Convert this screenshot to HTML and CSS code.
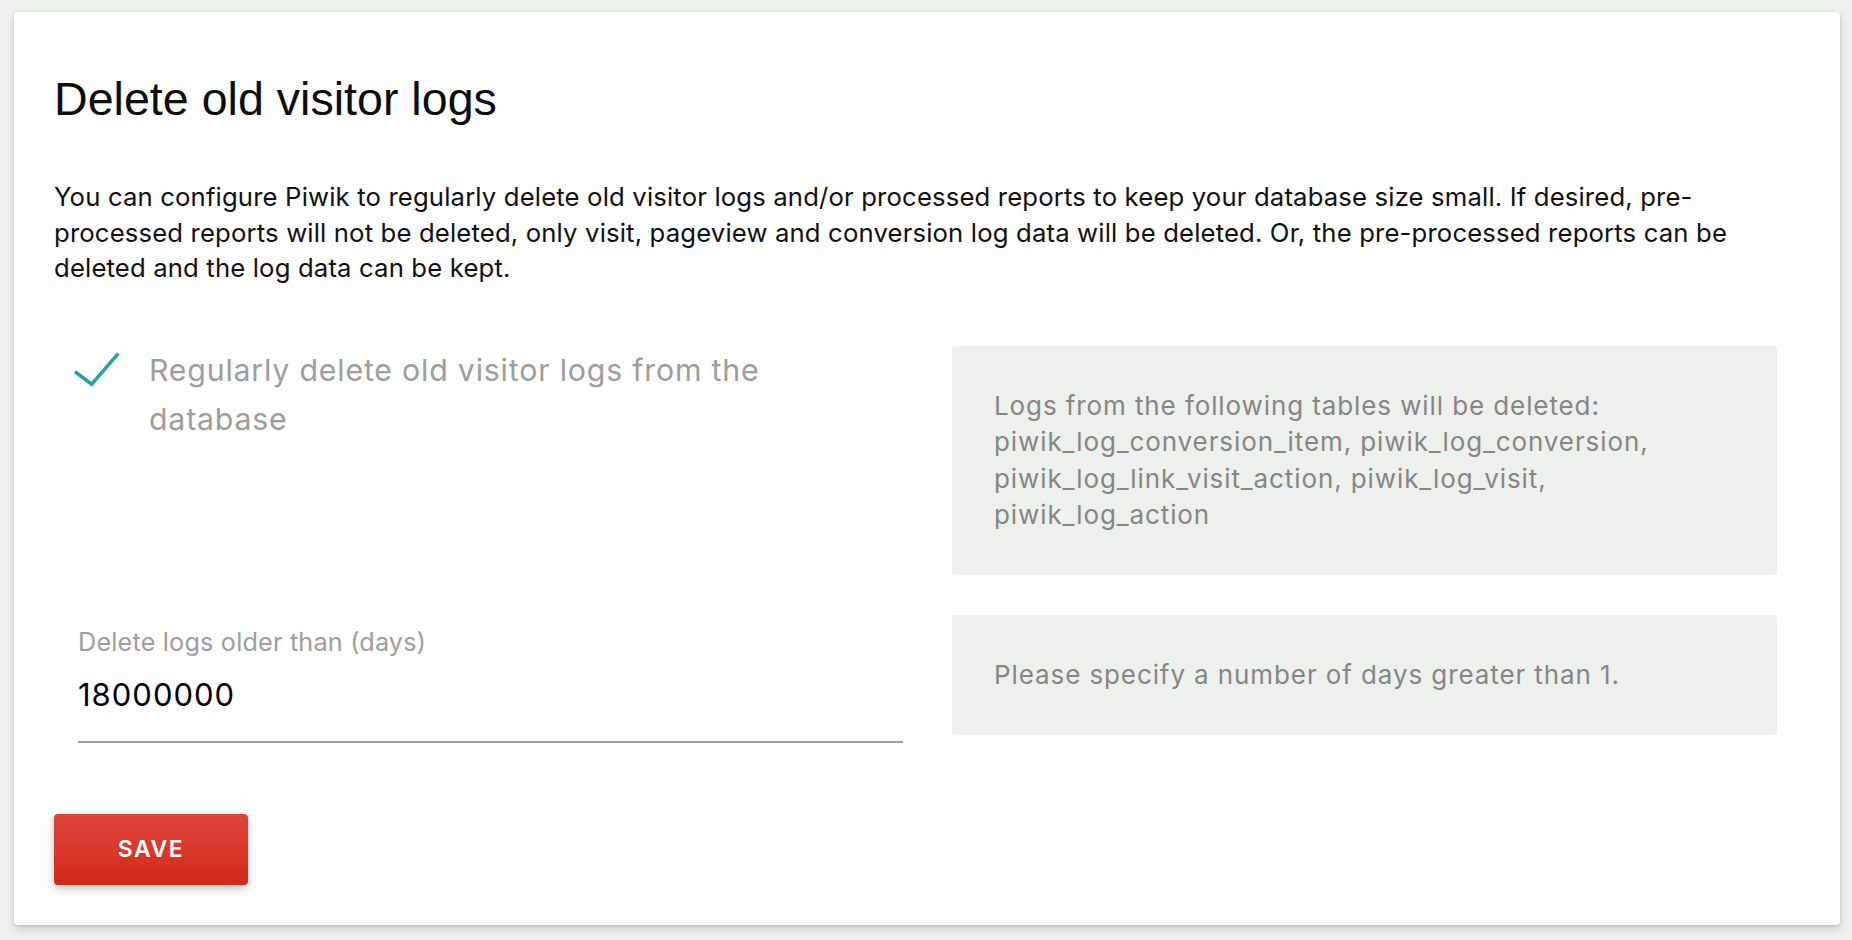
FILE: index.html
```html
<!DOCTYPE html>
<html>
<head>
    <title>Delete old visitor logs</title>
    <link rel="stylesheet" href="styles.css">
</head>
<body>
    <div class="card">
        <h2 class="card-title">Delete old visitor logs</h2>
        <p class="intro">You can configure Piwik to regularly delete old visitor logs and/or processed reports to keep your database size small. If desired, pre-processed reports will not be deleted, only visit, pageview and conversion log data will be deleted. Or, the pre-processed reports can be deleted and the log data can be kept.</p>

        <!-- checkbox row -->
        <div class="form-row">
            <div class="field">
                <label class="checkbox">
                    <svg class="check" width="46" height="40" viewBox="0 0 46 40">
                        <polyline points="1,24.7 17.7,37.3 44.3,6.3" fill="none" stroke="#26a69a" stroke-width="3.6"/>
                    </svg>
                    <span>Regularly delete old visitor logs from the database</span>
                </label>
            </div>
            <div class="inline-help">
                Logs from the following tables will be deleted:<br>
                piwik_log_conversion_item, piwik_log_conversion,<br>
                piwik_log_link_visit_action, piwik_log_visit,<br>
                piwik_log_action
            </div>
        </div>

        <!-- days row -->
        <div class="form-row second">
            <div class="field">
                <div class="field-label">Delete logs older than (days)</div>
                <input type="text" class="days-input" value="18000000">
            </div>
            <div class="inline-help">Please specify a number of days greater than 1.</div>
        </div>

        <button class="btn-save">SAVE</button>
    </div>
</body>
</html>
```

FILE: styles.css
```css
body {
    margin: 0;
    padding: 12px 12px 15px 14px;
    background-color: #eef0ee;
    font-family: Inter, "Liberation Sans", sans-serif;
}
.card {
    height: 913px;
    box-sizing: border-box;
    padding: 59px 39px 0 40px;
    background-color: #fdfdfd;
    border-radius: 4px;
    box-shadow: 0 4px 8px rgba(0,0,0,0.14), 0 1px 3px rgba(0,0,0,0.12);
}
.card-title {
    margin: 0;
    font-family: "Liberation Sans", Arial, sans-serif;
    font-weight: normal;
    font-size: 46.6px;
    line-height: 56px;
    color: #0d0d0d;
}
.intro {
    margin: 52px 0 0 0;
    font-size: 25.7px;
    letter-spacing: 0.15px;
    line-height: 35.7px;
    color: #111;
}
.form-row {
    display: grid;
    grid-template-columns: 1fr 1fr;
    column-gap: 49px;
    padding: 0 24px;
    margin-top: 60px;
    align-items: start;
}
.form-row.second {
    margin-top: 40px;
}
.checkbox {
    display: flex;
    align-items: flex-start;
    font-size: 30.3px;
    letter-spacing: 0.8px;
    line-height: 49px;
    color: #9e9e9e;
}
.check {
    flex: 0 0 auto;
    margin: 1px 29px 0 -4px;
}
.inline-help {
    padding: 42px;
    background-color: #edf0ed;
    border-radius: 4px;
    font-size: 26px;
    letter-spacing: 0.9px;
    line-height: 36.2px;
    color: #868686;
}
.field-label {
    margin-top: 12px;
    font-size: 25.2px;
    letter-spacing: 0.2px;
    line-height: 30px;
    color: #9e9e9e;
}
.days-input {
    display: block;
    width: 100%;
    box-sizing: border-box;
    height: 67px;
    margin-top: 19px;
    padding: 0 0 27px 0;
    border: none;
    border-bottom: 2px solid #9e9e9e;
    background: transparent;
    font-family: Inter, "Liberation Sans", sans-serif;
    font-size: 31px;
    letter-spacing: 1px;
    color: #000;
    outline: none;
}
.btn-save {
    display: block;
    margin-top: 71px;
    width: 194px;
    height: 71px;
    border: none;
    border-radius: 4px;
    background: linear-gradient(#dd463a, #d4291a);
    box-shadow: 0 4px 10px rgba(0,0,0,0.16), 0 2px 4px rgba(0,0,0,0.1);
    color: white;
    font-family: Inter, "Liberation Sans", sans-serif;
    font-size: 23px;
    font-weight: 600;
    letter-spacing: 1.5px;
    cursor: pointer;
}
```
